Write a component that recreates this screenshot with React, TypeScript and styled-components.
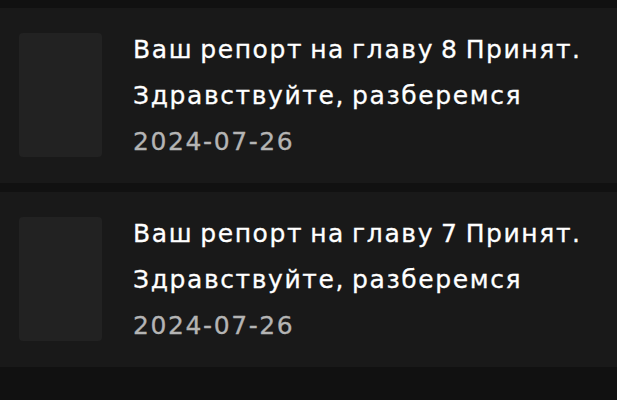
import React from "react";
import styled, { createGlobalStyle } from "styled-components";

const GlobalStyle = createGlobalStyle`
  html, body {
    margin: 0;
    padding: 0;
    background: #111111;
  }
  body {
    font-family: "DejaVu Sans", "Noto Sans", sans-serif;
  }
`;

const List = styled.div`
  display: flex;
  flex-direction: column;
  gap: 9px;
  padding-top: 8px;
`;

const Card = styled.div`
  display: flex;
  align-items: flex-start;
  gap: 31px;
  height: 175px;
  box-sizing: border-box;
  padding: 25px 19px;
  background: #191919;
`;

const Thumb = styled.div`
  flex: none;
  width: 83px;
  height: 124px;
  border-radius: 4px;
  background: #222222;
`;

const Body = styled.div`
  display: flex;
  flex-direction: column;
  gap: 12px;
`;

const Line = styled.div<{ $muted?: boolean }>`
  font-size: 25px;
  line-height: 34px;
  letter-spacing: 1.6px;
  word-spacing: -2.5px;
  color: ${(p) => (p.$muted ? "#b4b4b4" : "#ffffff")};
  -webkit-text-stroke: 0.3px ${(p) => (p.$muted ? "#b4b4b4" : "#ffffff")};
  white-space: nowrap;
`;

type Notice = { title: string; text: string; date: string };

const notices: Notice[] = [
  { title: "Ваш репорт на главу 8 Принят.", text: "Здравствуйте, разберемся", date: "2024-07-26" },
  { title: "Ваш репорт на главу 7 Принят.", text: "Здравствуйте, разберемся", date: "2024-07-26" },
];

export default function App() {
  return (
    <>
      <GlobalStyle />
      <List>
        {notices.map((n) => (
          <Card key={n.title}>
            <Thumb />
            <Body>
              <Line>{n.title}</Line>
              <Line>{n.text}</Line>
              <Line $muted>{n.date}</Line>
            </Body>
          </Card>
        ))}
      </List>
    </>
  );
}
